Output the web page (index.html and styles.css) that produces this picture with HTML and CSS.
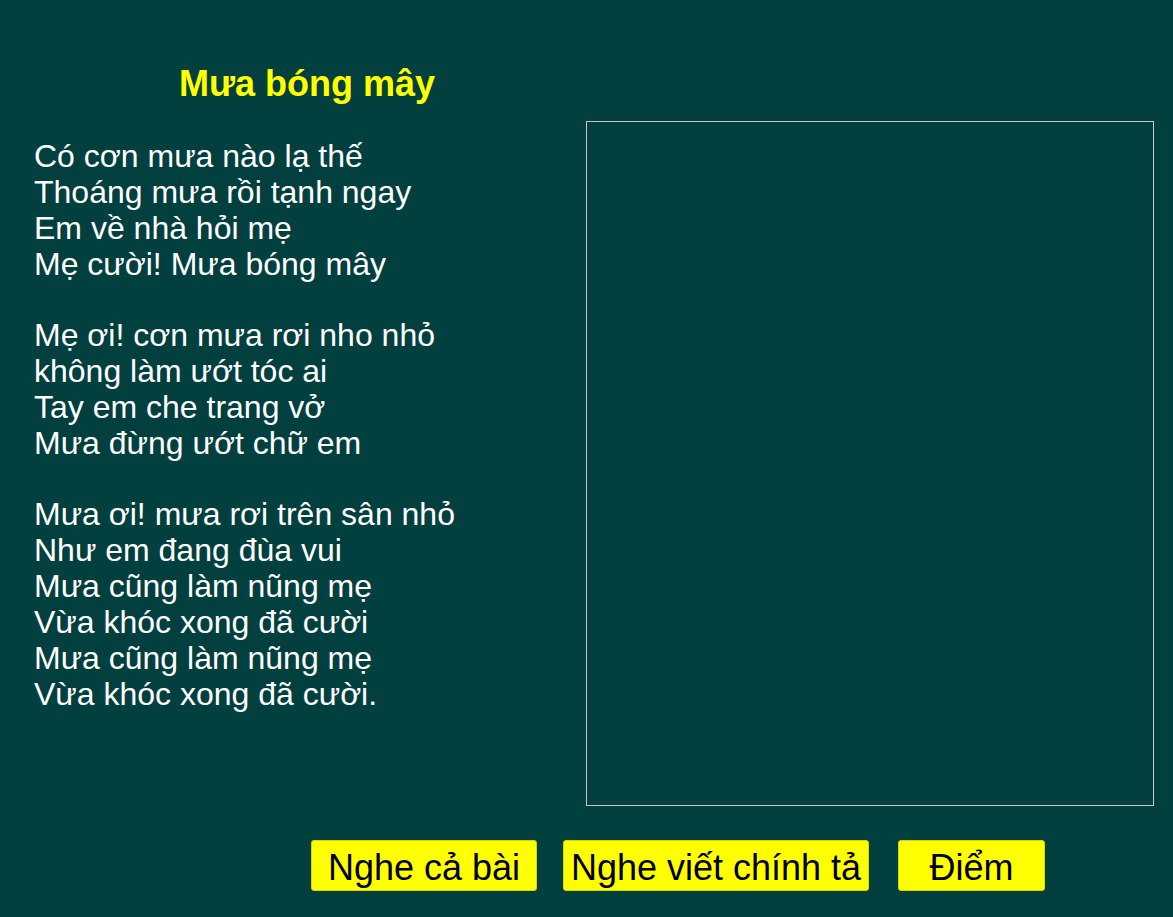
FILE: index.html
```html
<!DOCTYPE html>
<html lang="vi">
	<head>
		<meta charset="UTF-8" />
		<meta name="viewport" content="width=device-width, initial-scale=1.0" />
		<title>Mưa bóng mây</title>
		<link rel="stylesheet" href="styles.css">
	</head>
	<body>
		<div class="lesson">
			<div class="main-row">
				<div class="poem-col">
					<h1 class="poem-title">Mưa bóng mây</h1>
					<div class="poem">
						<p class="stanza">Có cơn mưa nào lạ thế<br>Thoáng mưa rồi tạnh ngay<br>Em về nhà hỏi mẹ<br>Mẹ cười! Mưa bóng mây</p>
						<p class="stanza">Mẹ ơi! cơn mưa rơi nho nhỏ<br>không làm ướt tóc ai<br>Tay em che trang vở<br>Mưa đừng ướt chữ em</p>
						<p class="stanza">Mưa ơi! mưa rơi trên sân nhỏ<br>Như em đang đùa vui<br>Mưa cũng làm nũng mẹ<br>Vừa khóc xong đã cười<br>Mưa cũng làm nũng mẹ<br>Vừa khóc xong đã cười.</p>
					</div>
				</div>
				<!-- writing area -->
				<div class="write-box"></div>
			</div>
			<div class="actions">
				<button class="btn btn-listen">Nghe cả bài</button>
				<button class="btn btn-dictation">Nghe viết chính tả</button>
				<button class="btn btn-score">Điểm</button>
			</div>
		</div>
	</body>
</html>
```

FILE: styles.css
```css
body {
	background: #023f3f;
	color: #fff;
	font-family: "Liberation Sans", Arial, sans-serif;
	margin: 0;
	padding: 0;
	min-height: 100vh;
}
.lesson {
	padding: 0 0 0 34px;
}
.main-row {
	display: flex;
	align-items: flex-start;
}
.poem-col {
	width: 546px;
	padding-top: 64px;
}
.poem-title {
	margin: 0 0 34px 0;
	font-size: 36px;
	font-weight: bold;
	color: #ffff00;
	text-align: center;
	line-height: 40px;
}
.poem {
	font-size: 32px;
	line-height: 36px;
}
.stanza {
	margin: 0 0 35px 0;
}
.write-box {
	margin: 121px 0 0 6px;
	width: 566px;
	height: 683px;
	border: 1px solid #c8c8c8;
}
.actions {
	display: flex;
	margin: 34px 0 0 277px;
}
.btn {
	height: 51px;
	background: #ffff00;
	border: 1px solid #d8d800;
	border-radius: 3px;
	color: #000;
	font-family: "Liberation Sans", Arial, sans-serif;
	font-size: 36px;
	padding: 4px 0 0 0;
	margin-right: 26px;
}
.btn-listen {
	width: 226px;
}
.btn-dictation {
	width: 306px;
	margin-right: 29px;
}
.btn-score {
	width: 147px;
}
```
